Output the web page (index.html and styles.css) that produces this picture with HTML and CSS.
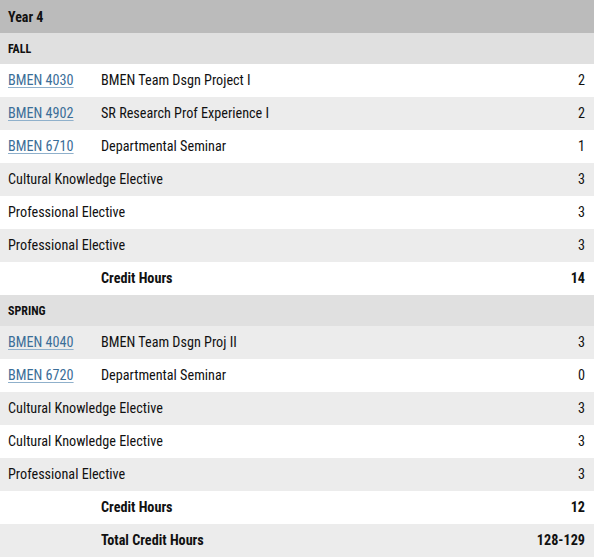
FILE: index.html
```html
<!DOCTYPE html>
<html>
<head>
<meta charset="utf-8">
<link rel="stylesheet" href="styles.css">
</head>
<body>
<table class="plan">
  <colgroup>
    <col class="col-code">
    <col class="col-title">
    <col class="col-hrs">
  </colgroup>
  <thead>
    <tr class="year"><th colspan="3">Year 4</th></tr>
  </thead>
  <tbody>
    <tr class="term"><td colspan="3">FALL</td></tr>
    <tr class="white"><td class="code"><a href="#">BMEN 4030</a></td><td class="title">BMEN Team Dsgn Project I</td><td class="hrs">2</td></tr>
    <tr class="gray"><td class="code"><a href="#">BMEN 4902</a></td><td class="title">SR Research Prof Experience I</td><td class="hrs">2</td></tr>
    <tr class="white"><td class="code"><a href="#">BMEN 6710</a></td><td class="title">Departmental Seminar</td><td class="hrs">1</td></tr>
    <tr class="gray"><td colspan="2" class="code">Cultural Knowledge Elective</td><td class="hrs">3</td></tr>
    <tr class="white"><td colspan="2" class="code">Professional Elective</td><td class="hrs">3</td></tr>
    <tr class="gray"><td colspan="2" class="code">Professional Elective</td><td class="hrs">3</td></tr>
    <tr class="white total"><td class="code"></td><td class="title">Credit Hours</td><td class="hrs">14</td></tr>
    <tr class="term"><td colspan="3">SPRING</td></tr>
    <tr class="gray"><td class="code"><a href="#">BMEN 4040</a></td><td class="title">BMEN Team Dsgn Proj II</td><td class="hrs">3</td></tr>
    <tr class="white"><td class="code"><a href="#">BMEN 6720</a></td><td class="title">Departmental Seminar</td><td class="hrs">0</td></tr>
    <tr class="gray"><td colspan="2" class="code">Cultural Knowledge Elective</td><td class="hrs">3</td></tr>
    <tr class="white"><td colspan="2" class="code">Cultural Knowledge Elective</td><td class="hrs">3</td></tr>
    <tr class="gray"><td colspan="2" class="code">Professional Elective</td><td class="hrs">3</td></tr>
    <tr class="white total"><td class="code"></td><td class="title">Credit Hours</td><td class="hrs">12</td></tr>
    <tr class="gray total"><td class="code"></td><td class="title">Total Credit Hours</td><td class="hrs">128-129</td></tr>
  </tbody>
</table>
</body>
</html>
```
FILE: styles.css
```css
html, body {
  margin: 0;
  padding: 0;
  background: #ffffff;
}
body {
  font-family: "Roboto", "Liberation Sans", sans-serif;
  font-stretch: condensed;
  font-size: 14.2px;
  color: #111111;
}
.plan {
  width: 594px;
  border-collapse: collapse;
  table-layout: fixed;
}
.col-code { width: 101px; }
.col-hrs { width: 80px; }
.plan td, .plan th {
  padding: 0;
  vertical-align: middle;
}
.year th {
  background: #bbbbbb;
  height: 33px;
  text-align: left;
  padding-left: 8px;
  font-weight: 700;
  font-size: 14px;
}
.term td {
  background: #e0e0e0;
  height: 31px;
  padding-left: 8px;
  font-weight: 700;
  font-size: 12px;
}
.white td, .gray td {
  height: 32px;
  padding-bottom: 1px;
}
.white td { background: #ffffff; }
.gray td { background: #ececec; }
.code {
  padding-left: 8px !important;
  white-space: nowrap;
}
.code a {
  color: #3b6e98;
  text-decoration: underline;
  text-decoration-color: #8fb0cb;
  text-underline-offset: 2px;
}
.hrs {
  text-align: right;
  padding-right: 9px !important;
}
.total td { font-weight: 700; }
```
